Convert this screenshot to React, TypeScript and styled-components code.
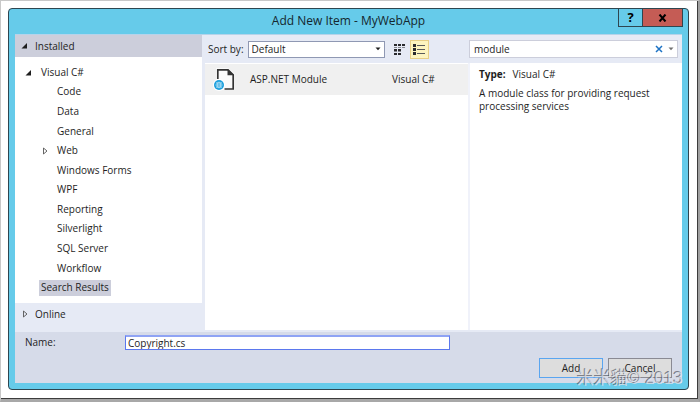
import React from "react";
import styled, { createGlobalStyle } from "styled-components";

const GlobalStyle = createGlobalStyle`
  *, *::before, *::after { box-sizing: border-box; }
  body { margin: 0; background: #ffffff; }
  body, button, input, select {
    font-family: "Open Sans", "Noto Sans", sans-serif;
    font-size: 10px;
    line-height: 13px;
    color: #1e1e1e;
  }
  button, input, select { margin: 0; border-radius: 0; outline: none; }
`;

const Page = styled.div`
  display: flex;
  min-height: 100vh;
  border-top: 1px solid #c8c8c8;
  border-left: 1px solid #c8c8c8;
  border-right: 2px solid #a0a0a0;
  border-bottom: 3px solid #a8a8a8;
`;

const Sheet = styled.div`
  display: flex;
  flex: 1;
  padding: 7px 8px 8px 7px;
  border-right: 1px solid #3c3c3c;
  border-bottom: 1px solid #3c3c3c;
`;

const Dialog = styled.section`
  position: relative;
  display: flex;
  flex-direction: column;
  flex: 1;
  padding: 0 6px 6px;
  border: 1px solid #2e4650;
  border-radius: 4px;
  background: #66cbea;
`;

const TitleBar = styled.header`
  display: grid;
  grid-template-columns: 1fr auto 1fr;
  align-items: start;
  height: 25px;
`;

const Title = styled.h1`
  grid-column: 2;
  margin: 0;
  padding-top: 2px;
  font-size: 12px;
  font-weight: 400;
  line-height: 20px;
  color: #14272e;
`;

const WindowButtons = styled.div`
  display: flex;
  justify-content: flex-end;
  margin: -1px -1px 0 0;
`;

const WindowButton = styled.button<{ $close?: boolean }>`
  display: flex;
  align-items: center;
  justify-content: center;
  width: ${(p) => (p.$close ? 41 : 25)}px;
  height: 19px;
  margin-left: ${(p) => (p.$close ? -1 : 0)}px;
  padding: 0;
  border: 1px solid #2e4650;
  background: ${(p) => (p.$close ? "#c55c55" : "#66cbea")};
  color: #000000;
  font-size: 13px;
  font-weight: 700;
`;

const Body = styled.main`
  display: grid;
  grid-template-columns: 187px 1fr;
  column-gap: 3px;
  flex: 1;
  padding-bottom: 2px;
  border-top: 1px solid #b5d3ea;
  background: #e6eaf5;
`;

const Sidebar = styled.nav`
  display: flex;
  flex-direction: column;
`;

const SectionHeader = styled.button<{ $active?: boolean }>`
  display: flex;
  align-items: center;
  gap: 6px;
  height: ${(p) => (p.$active ? 22 : 27)}px;
  padding: ${(p) => (p.$active ? "0 6px" : "0 6px 5px")};
  border: 0;
  background: ${(p) => (p.$active ? "#cccedb" : "transparent")};
  text-align: left;
`;

const Tree = styled.ul`
  display: flex;
  flex-direction: column;
  flex: 1;
  margin: 0;
  padding: 6px 0 5px;
  list-style: none;
  background: #ffffff;
`;

const TreeRow = styled.li<{ $level: number }>`
  display: flex;
  flex: 1;
  align-items: center;
  padding-left: ${(p) => 10 + p.$level * 16}px;
`;

const Twisty = styled.span`
  display: flex;
  width: 14px;
`;

const TreeLabel = styled.span<{ $selected?: boolean }>`
  padding: 1px 2px 2px;
  background: ${(p) => (p.$selected ? "#cccedb" : "transparent")};
`;

const Content = styled.div`
  display: grid;
  grid-template-columns: 263fr 214fr;
  grid-template-rows: 28px 1fr;
`;

const Toolbar = styled.div`
  display: flex;
  align-items: center;
  padding-left: 3px;
`;

const SelectBox = styled.div`
  display: grid;
  align-items: center;
  width: 137px;
  height: 17px;
  margin: 0 5px 0 4px;
  border: 1px solid #8f98b3;
  background: #ffffff;

  > * { grid-area: 1 / 1; }
  > svg { justify-self: end; margin-right: 3px; pointer-events: none; }
`;

const Select = styled.select`
  appearance: none;
  width: 100%;
  height: 15px;
  padding: 0 16px 0 3px;
  border: 0;
  background: transparent;
`;

const ViewButton = styled.button<{ $active?: boolean }>`
  display: flex;
  align-items: center;
  justify-content: center;
  width: 19px;
  height: 19px;
  margin-right: 1px;
  padding: 0;
  border: 1px solid ${(p) => (p.$active ? "#e8cf86" : "transparent")};
  background: ${(p) => (p.$active ? "#fdf4bf" : "transparent")};
`;

const SearchBar = styled.div`
  display: flex;
  align-items: center;
  padding: 0 4px 1px 1px;
`;

const SearchBox = styled.div`
  display: flex;
  align-items: center;
  flex: 1;
  height: 18px;
  padding-right: 3px;
  border: 1px solid #cccedb;
  background: #ffffff;
`;

const SearchInput = styled.input`
  flex: 1;
  min-width: 0;
  height: 16px;
  padding: 0 4px;
  border: 0;
  background: transparent;
`;

const IconButton = styled.button`
  display: flex;
  margin-left: 5px;
  padding: 0;
  border: 0;
  background: transparent;
`;

const ItemList = styled.ul`
  margin: 0;
  padding: 1px 0 0;
  list-style: none;
  background: #ffffff;
`;

const Item = styled.li`
  display: grid;
  grid-template-columns: 37px 1fr 76px;
  align-items: center;
  height: 31px;
  padding: 0 0 1px 8px;
  background: #f0f0f0;
`;

const Details = styled.aside`
  padding: 5px 9px;
  border-left: 2px solid #f0f2fa;
  background: #ffffff;
`;

const TypeLine = styled.p`
  display: flex;
  gap: 7px;
  margin: 0 0 6px;
`;

const Description = styled.p`
  margin: 0;
`;

const Footer = styled.footer`
  display: flex;
  flex-direction: column;
  justify-content: space-between;
  height: 51px;
  padding: 3px 10px 5px;
  background: #d6dbe9;
`;

const NameRow = styled.div`
  display: grid;
  grid-template-columns: 100px 325fr 222fr;
  align-items: center;
`;

const NameInput = styled.input`
  width: 100%;
  height: 15px;
  padding: 0 2px;
  border: 1px solid #5b78ee;
  border-top: 2px solid #8fa3f4;
  background: #ffffff;
`;

const Actions = styled.div`
  display: flex;
  justify-content: flex-end;
  gap: 5px;
`;

const ActionButton = styled.button<{ $primary?: boolean }>`
  width: 64px;
  height: 20px;
  padding: 0;
  border: 1px solid ${(p) => (p.$primary ? "#5aa5f0" : "#8a8a93")};
  background: #dddddd;
`;

const Watermark = styled.span`
  position: absolute;
  right: 5px;
  bottom: -1px;
  font-family: "Liberation Sans", "Noto Sans CJK TC", sans-serif;
  font-size: 17px;
  line-height: 22px;
  color: rgba(225, 228, 236, 0.75);
  text-shadow: -1px -1px 0 rgba(70, 75, 85, 0.65);
  pointer-events: none;
`;

const Expanded = () => (
  <svg width="8" height="8" viewBox="0 0 8 8" aria-hidden="true">
    <path d="M6 1v5.5H0.5z" fill="#1e1e1e" />
  </svg>
);

const Collapsed = () => (
  <svg width="8" height="8" viewBox="0 0 8 8" aria-hidden="true">
    <path d="M2.5 1v6l3.5-3z" fill="none" stroke="#555" strokeWidth="0.9" />
  </svg>
);

const Caret = ({ color = "#1e1e1e" }: { color?: string }) => (
  <svg width="6" height="4" viewBox="0 0 6 4" aria-hidden="true">
    <path d="M0.5 0.5h5L3 3.3z" fill={color} />
  </svg>
);

const SmallIcons = () => (
  <svg width="13" height="13" viewBox="0 0 13 13" aria-hidden="true">
    {[[1, 1], [5, 1], [9, 1], [1, 6], [5, 6], [1, 10], [5, 10]].map(([x, y]) => (
      <rect key={`${x}-${y}`} x={x} y={y} width="3" height="2" fill="#2a2a2e" />
    ))}
    {[[1, 4], [5, 4], [9, 4], [1, 8], [5, 8]].map(([x, y]) => (
      <rect key={`${x}-${y}`} x={x} y={y} width="3" height="1" fill="#85878f" />
    ))}
  </svg>
);

const ListIcon = () => (
  <svg width="15" height="13" viewBox="0 0 15 13" aria-hidden="true">
    {[1, 5, 9].map((y) => (
      <g key={y}>
        <rect x="1" y={y} width="3" height="3" fill="#2a2a2e" />
        <rect x="5" y={y + 1} width="8" height="1" fill="#5a5a5a" />
      </g>
    ))}
  </svg>
);

const ModuleIcon = () => (
  <svg width="22" height="24" viewBox="0 0 22 24" aria-hidden="true">
    <path d="M3 1h12l7 6v16H3z" fill="#fafafa" />
    <path d="M4.8 12V2.8h10.2l5.2 5v14.2h-8.7" fill="none" stroke="#333" strokeWidth="1.7" />
    <path d="M14.5 2v6.2H21z" fill="#333" />
    <circle cx="6" cy="18" r="6" fill="#fff" />
    <circle cx="6" cy="18" r="5" fill="#1b9fdd" />
    <path d="M3 16h6M2.5 18h7M3 20h6" stroke="#e6f6fd" strokeWidth="0.8" />
    <ellipse cx="6" cy="18" rx="1.7" ry="3" fill="none" stroke="#bfe6f7" strokeWidth="0.6" />
  </svg>
);

const ClearIcon = () => (
  <svg width="8" height="8" viewBox="0 0 8 8" aria-hidden="true">
    <path d="M1 1l6 6M7 1L1 7" stroke="#1c72c4" strokeWidth="1.5" />
  </svg>
);

const CloseIcon = () => (
  <svg width="9" height="8" viewBox="0 0 9 8" aria-hidden="true">
    <path d="M1.5 0.5l6 7M7.5 0.5l-6 7" stroke="#000" strokeWidth="2" />
  </svg>
);

type Node = { label: string; level: number; icon?: "open" | "closed"; selected?: boolean };

const nodes: Node[] = [
  { label: "Visual C#", level: 0, icon: "open" },
  { label: "Code", level: 1 },
  { label: "Data", level: 1 },
  { label: "General", level: 1 },
  { label: "Web", level: 1, icon: "closed" },
  { label: "Windows Forms", level: 1 },
  { label: "WPF", level: 1 },
  { label: "Reporting", level: 1 },
  { label: "Silverlight", level: 1 },
  { label: "SQL Server", level: 1 },
  { label: "Workflow", level: 1 },
  { label: "Search Results", level: 0, selected: true },
];

export default function App() {
  return (
    <>
      <GlobalStyle />
      <Page>
        <Sheet>
          <Dialog aria-labelledby="dialog-title">
            <TitleBar>
              <Title id="dialog-title">Add New Item - MyWebApp</Title>
              <WindowButtons>
                <WindowButton type="button">?</WindowButton>
                <WindowButton type="button" $close aria-label="Close"><CloseIcon /></WindowButton>
              </WindowButtons>
            </TitleBar>
            <Body>
              <Sidebar>
                <SectionHeader type="button" $active aria-expanded="true"><Expanded />Installed</SectionHeader>
                <Tree>
                  {nodes.map((n) => (
                    <TreeRow key={n.label} $level={n.level}>
                      <Twisty>
                        {n.icon === "open" && <Expanded />}
                        {n.icon === "closed" && <Collapsed />}
                      </Twisty>
                      <TreeLabel $selected={n.selected}>{n.label}</TreeLabel>
                    </TreeRow>
                  ))}
                </Tree>
                <SectionHeader type="button" aria-expanded="false"><Collapsed />Online</SectionHeader>
              </Sidebar>
              <Content>
                <Toolbar>
                  <label htmlFor="sort">Sort by:</label>
                  <SelectBox>
                    <Select id="sort" defaultValue="Default"><option>Default</option></Select>
                    <Caret />
                  </SelectBox>
                  <ViewButton type="button" aria-label="Small icons"><SmallIcons /></ViewButton>
                  <ViewButton type="button" $active aria-label="List"><ListIcon /></ViewButton>
                </Toolbar>
                <SearchBar>
                  <SearchBox>
                    <SearchInput aria-label="Search" defaultValue="module" />
                    <IconButton type="button" aria-label="Clear search"><ClearIcon /></IconButton>
                    <IconButton type="button" aria-label="Search options"><Caret color="#717171" /></IconButton>
                  </SearchBox>
                </SearchBar>
                <ItemList>
                  <Item>
                    <ModuleIcon />
                    <span>ASP.NET Module</span>
                    <span>Visual C#</span>
                  </Item>
                </ItemList>
                <Details>
                  <TypeLine><strong>Type:</strong><span>Visual C#</span></TypeLine>
                  <Description>A module class for providing request processing services</Description>
                </Details>
              </Content>
            </Body>
            <Footer>
              <NameRow>
                <label htmlFor="name">Name:</label>
                <NameInput id="name" defaultValue="Copyright.cs" />
              </NameRow>
              <Actions>
                <ActionButton type="button" $primary>Add</ActionButton>
                <ActionButton type="button">Cancel</ActionButton>
              </Actions>
            </Footer>
            <Watermark>米米貓© 2013</Watermark>
          </Dialog>
        </Sheet>
      </Page>
    </>
  );
}
